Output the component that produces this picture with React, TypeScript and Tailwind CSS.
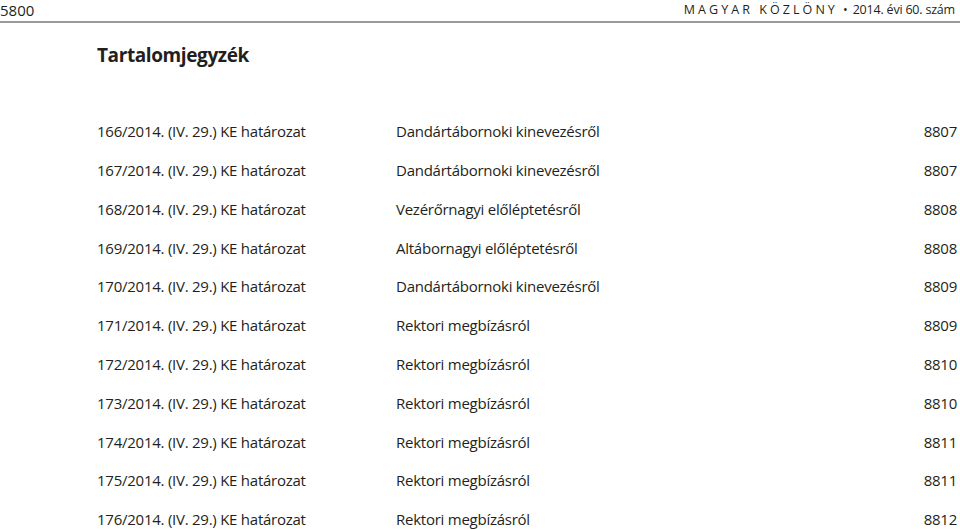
export default function App() {
  const rows = [
    ['166', 'Dandártábornoki kinevezésről', '8807'],
    ['167', 'Dandártábornoki kinevezésről', '8807'],
    ['168', 'Vezérőrnagyi előléptetésről', '8808'],
    ['169', 'Altábornagyi előléptetésről', '8808'],
    ['170', 'Dandártábornoki kinevezésről', '8809'],
    ['171', 'Rektori megbízásról', '8809'],
    ['172', 'Rektori megbízásról', '8810'],
    ['173', 'Rektori megbízásról', '8810'],
    ['174', 'Rektori megbízásról', '8811'],
    ['175', 'Rektori megbízásról', '8811'],
    ['176', 'Rektori megbízásról', '8812'],
  ]
  return (
    <div className="w-[960px] h-[530px] overflow-hidden bg-white text-[#231f20] font-['Open_Sans',sans-serif]">
      <header className="flex items-center justify-between h-[23px] pr-[5px] pb-[1px] border-b-2 border-[#9a9a9a]">
        <span className="text-[15px] leading-none">5800</span>
        <span className="text-[12.5px] leading-none">
          <span className="tracking-[0.245em]">MAGYAR KÖZLÖNY</span>
          <span className="mx-[5px]">•</span>
          <span className="tracking-[-0.2px]">2014. évi 60. szám</span>
        </span>
      </header>
      <h1 className="pl-[97px] mt-[23px] text-[19px] font-bold leading-none tracking-[-0.4px]">Tartalomjegyzék</h1>
      <div className="mt-[47px] flex flex-col">
        {rows.map(([n, title, page]) => (
          <div key={n} className="flex items-center h-[38.8px] pl-[97px] pr-[3px] text-[15px] tracking-[-0.25px]">
            <span className="w-[299px]">{n}/2014. (IV. 29.) KE határozat</span>
            <span className="flex-1">{title}</span>
            <span>{page}</span>
          </div>
        ))}
      </div>
    </div>
  )
}
